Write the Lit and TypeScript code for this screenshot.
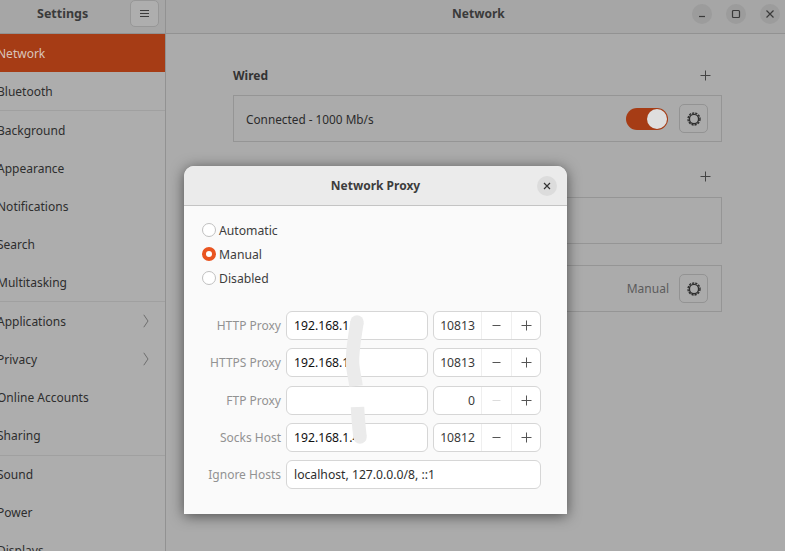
import { LitElement, html, css, nothing } from 'lit';
import { customElement } from 'lit/decorators.js';

const GROUPS = [
  [{ name: 'Network', active: true }, { name: 'Bluetooth' }],
  [{ name: 'Background' }, { name: 'Appearance' }, { name: 'Notifications' }, { name: 'Search' }, { name: 'Multitasking' }],
  [{ name: 'Applications', more: true }, { name: 'Privacy', more: true }, { name: 'Online Accounts' }, { name: 'Sharing' }],
  [{ name: 'Sound' }, { name: 'Power' }, { name: 'Displays' }],
];

const PROXIES = [
  { label: 'HTTP Proxy', host: '192.168.1.', port: '10813', min: false },
  { label: 'HTTPS Proxy', host: '192.168.1', port: '10813', min: false },
  { label: 'FTP Proxy', host: '', port: '0', min: true },
  { label: 'Socks Host', host: '192.168.1.4', port: '10812', min: false },
];

const gear = html`<svg width="18" height="18" viewBox="0 0 18 18" fill="none" stroke="#2e2e2e">
  <circle cx="9" cy="9" r="4.6" stroke-width="1.4"></circle>
  <circle cx="9" cy="9" r="6" stroke-width="1.4" stroke-dasharray="2.2 1"></circle>
</svg>`;

const plus = html`<svg width="11" height="11" viewBox="0 0 11 11" stroke="currentColor" stroke-width="1"><path d="M5.5 0.5v10M0.5 5.5h10"></path></svg>`;
const minus = html`<svg width="11" height="11" viewBox="0 0 11 11" stroke="currentColor" stroke-width="1"><path d="M1.5 5.5h8"></path></svg>`;

@customElement('app-root')
export class AppRoot extends LitElement {
  static styles = css`
    :host {
      display: block;
      position: relative;
      width: 785px;
      height: 551px;
      overflow: hidden;
      font-family: 'Noto Sans', 'Open Sans', sans-serif;
      font-size: 12.2px;
      color: #2b2b2b;
      background: #ababab;
    }

    .window {
      display: grid;
      grid-template-columns: 166px 1fr;
      grid-template-rows: 34px 1fr;
      height: 100%;
    }

    .head-left,
    .head-right {
      display: flex;
      align-items: center;
      background: #a6a6a6;
      border-bottom: 1px solid #929292;
      box-sizing: border-box;
      font-weight: 700;
      color: #3a3a3a;
    }

    .head-left {
      border-right: 1px solid #929292;
      padding: 0 6px 6px 37px;
      justify-content: space-between;
      font-size: 12.5px;
    }

    .menu-btn {
      width: 29px;
      height: 27px;
      margin-top: -1px;
      display: flex;
      align-items: center;
      justify-content: center;
      box-sizing: border-box;
      border: 1px solid #979797;
      border-radius: 5px;
      background: #aeaeae;
      color: #3c3c3c;
    }

    .head-right {
      padding: 0 5px 6px 286px;
      justify-content: space-between;
      font-size: 12px;
    }

    .controls {
      display: flex;
      gap: 14px;
    }

    .ctl {
      width: 20px;
      height: 20px;
      border-radius: 50%;
      background: #9c9c9c;
      display: flex;
      align-items: center;
      justify-content: center;
      color: #3a3a3a;
    }

    .sidebar {
      background: #adadad;
      border-right: 1px solid #929292;
      overflow: hidden;
      font-size: 12px;
    }

    .group + .group {
      border-top: 1px solid #a0a0a0;
    }

    .row {
      height: 38.05px;
      display: flex;
      align-items: center;
      justify-content: space-between;
      padding: 0 16px 0 0;
      text-indent: -3px;
      color: #2e2e2e;
    }

    .row.active {
      background: #a63c15;
      color: #d9c4bb;
    }

    .main {
      padding: 31px 63px 0 67px;
      font-size: 12px;
    }

    .section {
      display: flex;
      justify-content: space-between;
      align-items: center;
      height: 20px;
      padding-right: 11px;
      margin-bottom: 10px;
      font-weight: 700;
      color: #333;
    }

    .section svg {
      color: #444;
    }

    .card {
      height: 47px;
      box-sizing: border-box;
      border: 1px solid #959595;
      display: flex;
      align-items: center;
      justify-content: space-between;
      padding: 0 13px 0 12px;
    }

    .card-label {
      font-size: 11.8px;
    }

    .card + .section {
      margin-top: 24px;
      margin-bottom: 11px;
    }

    .card.next {
      margin-top: 21px;
    }

    .card-end {
      display: flex;
      align-items: center;
      gap: 10px;
    }

    .muted {
      color: #5c5c5c;
    }

    .toggle {
      width: 42px;
      height: 22px;
      margin-right: 1px;
      border-radius: 11px;
      background: #a63c15;
      display: flex;
      justify-content: flex-end;
      align-items: center;
      padding-right: 1px;
      box-sizing: border-box;
    }

    .knob {
      width: 20px;
      height: 20px;
      border-radius: 50%;
      background: #dedede;
    }

    .gear-btn {
      width: 29px;
      height: 29px;
      box-sizing: border-box;
      border: 1px solid #939393;
      border-radius: 5px;
      display: flex;
      align-items: center;
      justify-content: center;
    }

    .dialog {
      position: absolute;
      left: 184px;
      top: 166px;
      width: 383px;
      height: 348px;
      background: #fafafa;
      border-radius: 10px 10px 0 0;
      box-shadow: 0 2px 14px rgba(0, 0, 0, 0.55);
      overflow: hidden;
    }

    .dialog-head {
      height: 40px;
      box-sizing: border-box;
      background: #ebebeb;
      border-bottom: 1px solid #c4c4c4;
      display: grid;
      grid-template-columns: 1fr auto 1fr;
      align-items: center;
      padding: 0 10px;
      font-weight: 700;
      font-size: 12px;
      color: #3d3d3d;
    }

    .dialog-title {
      grid-column: 2;
    }

    .close {
      grid-column: 3;
      justify-self: end;
      width: 20px;
      height: 20px;
      border-radius: 50%;
      background: #dcdcdc;
      display: flex;
      align-items: center;
      justify-content: center;
      color: #333;
    }

    .dialog-body {
      padding: 12px 26px 0 18px;
    }

    .radios {
      display: flex;
      flex-direction: column;
    }

    .radio {
      height: 24px;
      display: flex;
      align-items: center;
      gap: 3px;
      color: #3d3d3d;
    }

    .dot {
      width: 14px;
      height: 14px;
      box-sizing: border-box;
      border: 1px solid #c0c0c0;
      border-radius: 50%;
      background: #fff;
      flex: none;
    }

    .dot.on {
      border: 4.5px solid #e95420;
    }

    .form {
      margin-top: 21px;
      display: grid;
      grid-template-columns: 79px 142px 108px;
      grid-auto-rows: 29px;
      gap: 8.3px 5px;
      align-items: center;
    }

    .label {
      text-align: right;
      color: #929292;
      font-size: 12px;
      white-space: nowrap;
    }

    .input {
      height: 29px;
      box-sizing: border-box;
      border: 1px solid #d6d6d6;
      border-radius: 6px;
      background: #fff;
      display: flex;
      align-items: center;
      padding: 0 7px;
      color: #111;
    }

    .input.wide {
      grid-column: 2 / 4;
      color: #2e2e2e;
    }

    .spin {
      height: 29px;
      box-sizing: border-box;
      border: 1px solid #d6d6d6;
      border-radius: 6px;
      background: #fff;
      display: grid;
      grid-template-columns: 47px 30px 29px;
      color: #3a3a3a;
    }

    .port {
      display: flex;
      align-items: center;
      justify-content: flex-end;
      padding-right: 6px;
    }

    .step {
      display: flex;
      align-items: center;
      justify-content: center;
      border-left: 1px solid #efefef;
      color: #555;
    }

    .step.off {
      color: #dcdcdc;
    }

    .smudge {
      position: absolute;
      left: 0;
      top: 0;
      pointer-events: none;
    }
  `;

  render() {
    return html`
      <div class="window">
        <div class="head-left">
          <span>Settings</span>
          <div class="menu-btn">
            <svg width="11" height="11" viewBox="0 0 11 11" stroke="currentColor" stroke-width="1"><path d="M1 2.5h9M1 5.5h9M1 8.5h9"></path></svg>
          </div>
        </div>
        <div class="head-right">
          <span>Network</span>
          <div class="controls">
            <div class="ctl">
              <svg width="10" height="10" viewBox="0 0 10 10" stroke="currentColor" stroke-width="1.2"><path d="M2 7.5h6"></path></svg>
            </div>
            <div class="ctl">
              <svg width="10" height="10" viewBox="0 0 10 10" fill="none" stroke="currentColor" stroke-width="1.2"><rect x="1.5" y="1.5" width="7" height="7" rx="1"></rect></svg>
            </div>
            <div class="ctl">
              <svg width="10" height="10" viewBox="0 0 10 10" stroke="currentColor" stroke-width="1.2"><path d="M1.5 1.5l7 7M8.5 1.5l-7 7"></path></svg>
            </div>
          </div>
        </div>
        <nav class="sidebar">
          ${GROUPS.map(group => html`
            <div class="group">
              ${group.map(item => html`
                <div class="row ${item.active ? 'active' : ''}">
                  <span>${item.name}</span>
                  ${item.more ? html`<svg width="6" height="14" viewBox="0 0 6 14" fill="none" stroke="#666" stroke-width="0.9"><path d="M0.8 0.8l4.2 6.2-4.2 6.2"></path></svg>` : nothing}
                </div>
              `)}
            </div>
          `)}
        </nav>
        <main class="main">
          <div class="section"><span>Wired</span>${plus}</div>
          <div class="card">
            <span class="card-label">Connected - 1000 Mb/s</span>
            <div class="card-end">
              <div class="toggle"><div class="knob"></div></div>
              <div class="gear-btn">${gear}</div>
            </div>
          </div>
          <div class="section"><span></span>${plus}</div>
          <div class="card"></div>
          <div class="card next">
            <span></span>
            <div class="card-end">
              <span class="muted">Manual</span>
              <div class="gear-btn">${gear}</div>
            </div>
          </div>
        </main>
      </div>

      <section class="dialog">
        <header class="dialog-head">
          <span class="dialog-title">Network Proxy</span>
          <div class="close">
            <svg width="10" height="10" viewBox="0 0 10 10" stroke="currentColor" stroke-width="1.2"><path d="M2 2l6 6M8 2l-6 6"></path></svg>
          </div>
        </header>
        <div class="dialog-body">
          <div class="radios">
            <div class="radio"><span class="dot"></span>Automatic</div>
            <div class="radio"><span class="dot on"></span>Manual</div>
            <div class="radio"><span class="dot"></span>Disabled</div>
          </div>
          <div class="form">
            ${PROXIES.map(p => html`
              <span class="label">${p.label}</span>
              <div class="input">${p.host}</div>
              <div class="spin">
                <div class="port">${p.port}</div>
                <div class="step ${p.min ? 'off' : ''}">${minus}</div>
                <div class="step">${plus}</div>
              </div>
            `)}
            <span class="label">Ignore Hosts</span>
            <div class="input wide">localhost, 127.0.0.0/8, ::1</div>
          </div>
        </div>
        <svg class="smudge" width="383" height="348" fill="none" stroke="#ebebeb" stroke-width="13.5">
          <path d="M173 156C171 170 168 185 168.5 197C169 205 171 212 172 220"></path>
          <circle cx="173" cy="156" r="6.75" fill="#ebebeb" stroke="none"></circle>
          <path d="M173.5 241C174 252 175 262 176 271"></path>
          <circle cx="176" cy="271" r="6.75" fill="#ebebeb" stroke="none"></circle>
        </svg>
      </section>
    `;
  }
}

declare global {
  interface HTMLElementTagNameMap {
    'app-root': AppRoot;
  }
}
